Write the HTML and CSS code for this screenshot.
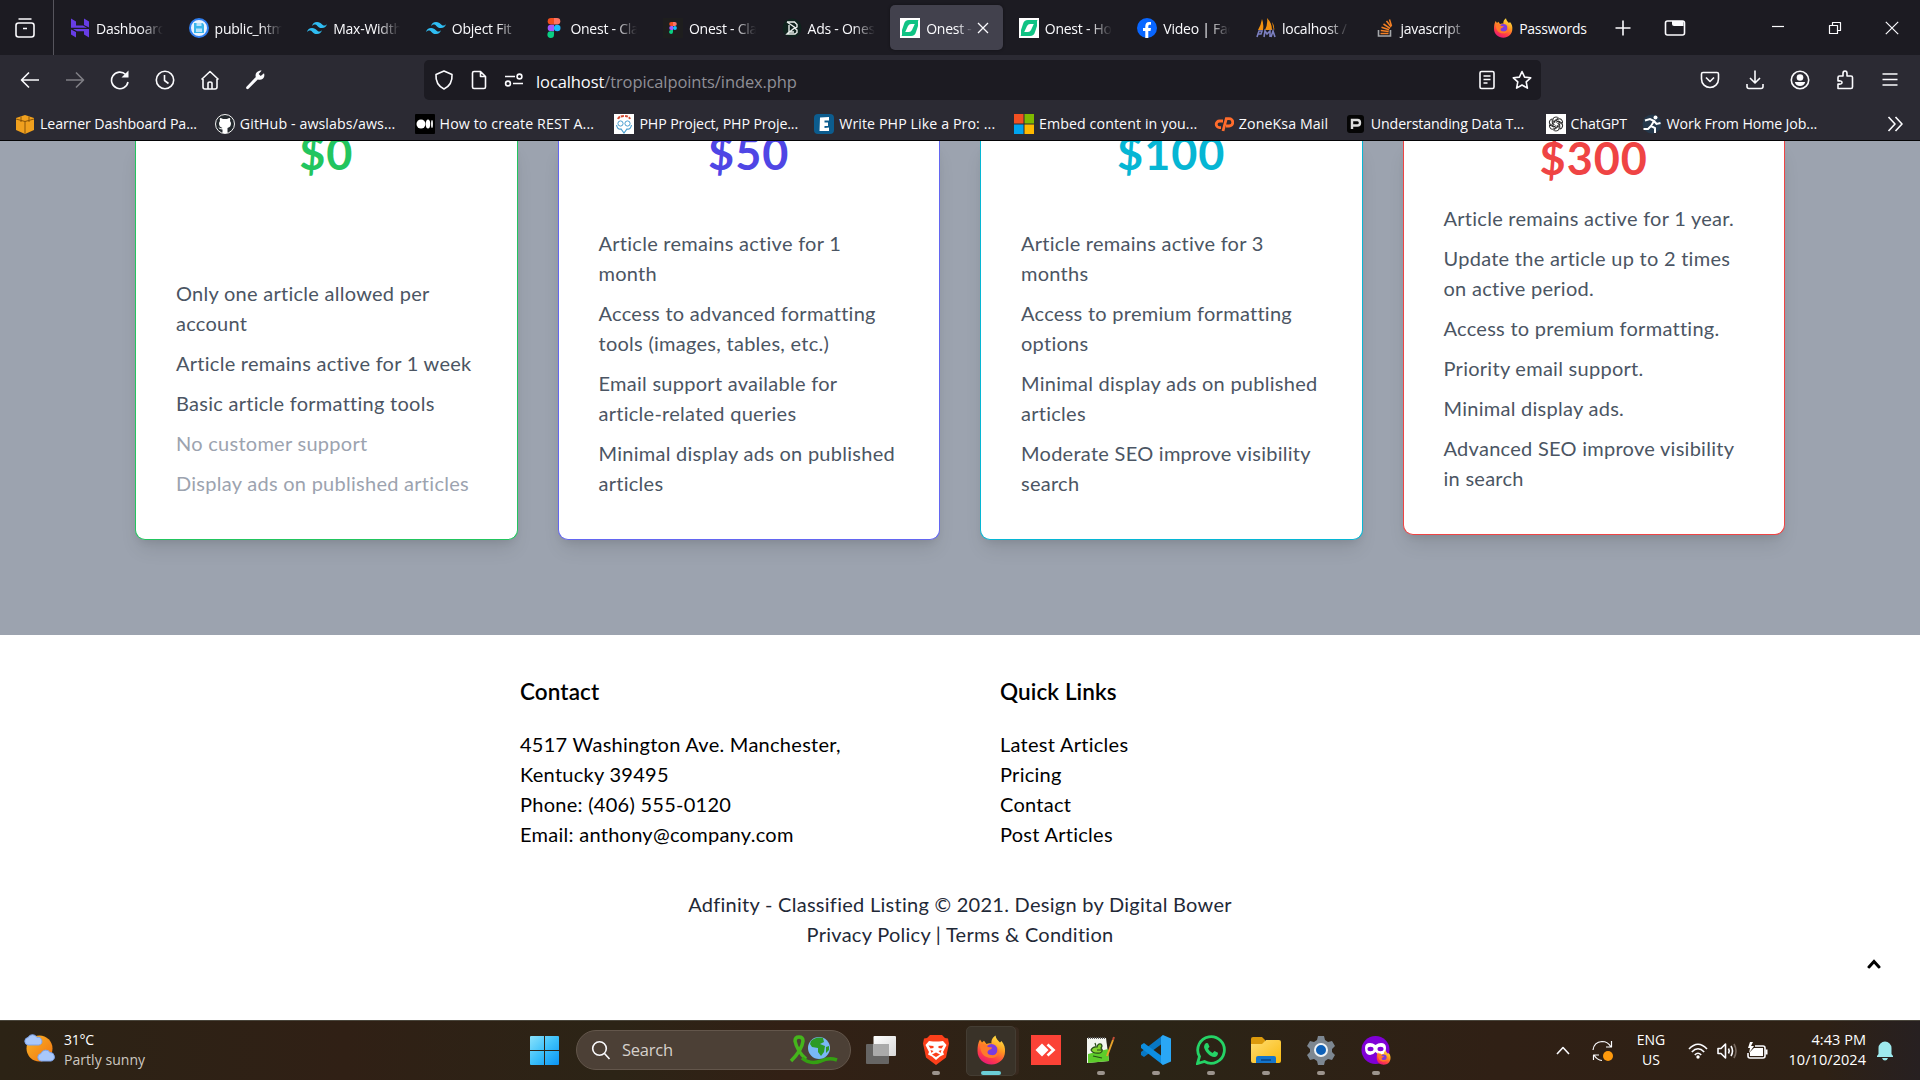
FILE: index.html
```html
<!DOCTYPE html>
<html lang="en">
<head>
<meta charset="utf-8">
<title>Onest - Home</title>
<link rel="stylesheet" href="styles.css">
</head>
<body>
<svg width="0" height="0" class="defs">
  <defs>
    <linearGradient id="ffBody" x1="0.8" y1="0" x2="0.3" y2="1"><stop offset="0" stop-color="#ffe94a"/><stop offset=".4" stop-color="#ff9a1f"/><stop offset=".75" stop-color="#ff3b47"/><stop offset="1" stop-color="#e5177b"/></linearGradient>
    <linearGradient id="win" x1="0" y1="0" x2="1" y2="1"><stop offset="0" stop-color="#8ae2fb"/><stop offset=".5" stop-color="#3cc0fa"/><stop offset="1" stop-color="#0a93f4"/></linearGradient>
    <linearGradient id="sun" x1="0" y1="0" x2="1" y2="1"><stop offset="0" stop-color="#f9b528"/><stop offset="1" stop-color="#f2730f"/></linearGradient>
    <linearGradient id="folder" x1="0" y1="0" x2="1" y2="1"><stop offset="0" stop-color="#ffdd72"/><stop offset="1" stop-color="#f9b90e"/></linearGradient>
    <linearGradient id="glass" x1="0" y1="0" x2="1" y2="1"><stop offset="0" stop-color="#ffffff"/><stop offset="1" stop-color="#d8d8d8"/></linearGradient>
    <symbol id="firefox" viewBox="0 0 30 30">
      <path d="M1.500 16C1.500 11 2 8 4 4.500L6 7.500 8 5.800 10.500 9C12 8 14 8 15.500 8.500 15 5 17 2 19.500.5 20 4 22 5.500 24 7.500L25.500 6C28.500 9.500 29.300 13 29 16.500 29 24 23 29.500 15.500 29.500S1.500 24 1.500 16Z" fill="url(#ffBody)"/>
      <circle cx="15.500" cy="15" r="6" fill="#7a3be0"/>
      <path d="M4 9C7 8 10 9 12 12L16 12.500C16 14 14 14.500 13 15 10 17 12 20 15 20 20 21 23 17 21 12 25 17 22 23 15.500 23 8 23 4 18 4 9Z" fill="#ff7a2a"/>
    </symbol>
    <symbol id="figma" viewBox="0 0 20 20">
      <path d="M10 0H7a3.300 3.300 0 0 0 0 6.600h3Z" fill="#f24e1e"/><path d="M10 0h3a3.300 3.300 0 0 1 0 6.600h-3Z" fill="#ff7262"/><path d="M10 6.700H7a3.300 3.300 0 0 0 0 6.600h3Z" fill="#a259ff"/><circle cx="13.200" cy="10" r="3.300" fill="#1abcfe"/><path d="M10 13.400H7a3.300 3.300 0 1 0 3 3.300Z" fill="#0acf83"/>
    </symbol>
    <symbol id="tailwind" viewBox="0 0 20 20"><path d="M10 4C7.300 4 5.700 5.300 5 8c1-1.300 2.200-1.800 3.500-1.500.8.200 1.300.8 1.900 1.400C11.400 8.900 12.500 10 15 10c2.700 0 4.300-1.300 5-4-1 1.300-2.200 1.800-3.500 1.500-.8-.2-1.300-.8-1.900-1.400C13.600 5.100 12.500 4 10 4ZM5 10c-2.700 0-4.300 1.300-5 4 1-1.300 2.200-1.800 3.500-1.500.8.200 1.300.8 1.900 1.400C6.400 14.900 7.500 16 10 16c2.700 0 4.300-1.300 5-4-1 1.300-2.200 1.800-3.500 1.500-.8-.2-1.300-.8-1.900-1.400C8.600 11.100 7.500 10 5 10Z" fill="#2fbdf2"/></symbol>
    <symbol id="onest" viewBox="0 0 20 20"><path d="M0 0h20v20H0Z" fill="#fff"/><path d="M2 12 4 6Q5 2 9 2h9.500L16.500 6H11Q9 6 8 8L5 14.500Q4 17 2 18ZM18 8l-2 6q-1 4-5 4H1.500L3.500 14H9q2 0 3-2l3-6.500Q16 3 18 2Z" fill="#10c384"/></symbol>
  </defs>
</svg>

<header class="browser">
  <div class="tabstrip">
    <div class="view-button"><svg class="line" width="22" height="22" viewBox="0 0 22 22"><path d="M4.500 2h13M2 8.500Q2 6 4.500 6h13Q20 6 20 8.500v9Q20 20 17.500 20h-13Q2 20 2 17.500ZM9 11.500h4"/></svg></div>
    <div class="tabs">
      <div class="tab"><svg viewBox="0 0 20 20"><path d="M1 .5 6 3.500v4h7l4 2.300H1ZM14 .5l5 3V9.500L14 7ZM19 19.500l-5-3v-3.200H7L3 11h16ZM1 11.500l5 2.500v5.500l-5-3Z" fill="#673de6"/></svg><span class="title">Dashboard</span></div>
      <div class="tab"><svg viewBox="0 0 20 20"><circle cx="10" cy="10" r="9" fill="#e8f3ff" stroke="#2f7ff0" stroke-width="2"/><path d="M5 5h8.500L15 6.500V15H5Z" fill="#39b5ea"/><path d="M7.500 5v3h5V5ZM7 10.500h6V14H7Z" fill="#b8e2fb"/></svg><span class="title">public_html</span></div>
      <div class="tab"><svg><use href="#tailwind"/></svg><span class="title">Max-Width</span></div>
      <div class="tab"><svg><use href="#tailwind"/></svg><span class="title">Object Fit</span></div>
      <div class="tab"><svg><use href="#figma"/></svg><span class="title">Onest - Classified</span></div>
      <div class="tab"><svg viewBox="0 0 20 20"><path d="M0 0h20v20H0Z" fill="#1e1e1e"/><use href="#figma" x="4" y="4" width="12" height="12"/></svg><span class="title">Onest - Classified</span></div>
      <div class="tab"><svg viewBox="0 0 20 20"><circle cx="10" cy="10" r="9.500" fill="#10231e"/><path d="M5 4h7.500L15 6.500V9l-2 1.500L15 12v2.500L13 16H5l2-2M5 4l8 5.500L5 16M7 7v7h5" fill="none" stroke="#e9efec" stroke-width="1.400"/></svg><span class="title">Ads - Onest</span></div>
      <div class="tab active"><svg><use href="#onest"/></svg><span class="title short">Onest - Home</span><svg class="line close" viewBox="0 0 12 12"><path d="m1 1 10 10M11 1 1 11"/></svg></div>
      <div class="tab"><svg><use href="#onest"/></svg><span class="title">Onest - Home</span></div>
      <div class="tab"><svg viewBox="0 0 20 20"><circle cx="10" cy="10" r="10" fill="#0866ff"/><path d="M8.300 20v-7H6v-3h2.300V8.200C8.300 5.500 9.800 4 12 4h2v2.700h-1.200c-1.100 0-1.500.6-1.500 1.500V10H14l-.5 3h-2.200v7Z" fill="#fff"/></svg><span class="title">Video | Facebook</span></div>
      <div class="tab"><svg viewBox="0 0 20 20"><path d="M2 12Q5 7 6 1 8 6 7 12ZM9 12Q12 6 11 0q5 5 5 12ZM16 4q3 4 2 9Z" fill="#f29111"/><path d="m1 19 2-6h3l-1 3H2M8 19l1-6 2 3 3-3v6M15 19l2-6 2 6" fill="none" stroke="#7b7fc0" stroke-width="1.600"/></svg><span class="title">localhost / 127</span></div>
      <div class="tab"><svg viewBox="0 0 20 20"><path d="M3.500 12v6h12v-6" fill="none" stroke="#a5a8ab" stroke-width="1.600"/><path d="M5.500 15.500h8M5.700 12.500l8 1M6.500 9.200l7.500 2.600M8.500 6l6.500 4.300M11.500 3l4.700 6M14.500 1.500l2 6.500" stroke="#f48024" stroke-width="1.500"/></svg><span class="title">javascript</span></div>
      <div class="tab"><svg><use href="#firefox"/></svg><span class="title full">Passwords</span></div>
    </div>
    <div class="strip-tools">
      <svg class="line" width="18" height="18" viewBox="0 0 18 18"><path d="M9 1.500v15M1.500 9h15"/></svg>
      <svg class="line" width="22" height="18" viewBox="0 0 22 18"><path d="M1.500 4Q1.500 2 3.500 2h15Q20.500 2 20.500 4v10q0 2-2 2h-15q-2 0-2-2Z"/><path d="M8 2h11.500v5H10Q8 7 8 5Z" fill="#fbfbfe" stroke="none"/></svg>
    </div>
    <div class="window-tools">
      <svg class="line thin" width="14" height="14" viewBox="0 0 14 14"><path d="M1 5.500h12"/></svg>
      <svg class="line thin" width="14" height="14" viewBox="0 0 14 14"><path d="M1.500 4.500h8v8h-8ZM4.500 4V1.500h8v8H10"/></svg>
      <svg class="line thin" width="14" height="14" viewBox="0 0 14 14"><path d="m.8.800 12.400 12.400M13.200.8.800 13.200"/></svg>
    </div>
  </div>

  <div class="toolbar">
    <div class="nav-icons">
      <svg class="line" viewBox="0 0 20 20"><path d="M19 10H1.500M9 2.500 1.500 10 9 17.500"/></svg>
      <svg class="line dim" viewBox="0 0 20 20"><path d="M1 10h17.500M11 2.500 18.500 10 11 17.500"/></svg>
      <svg class="line" viewBox="0 0 20 20"><path d="M18 12a8.300 8.300 0 1 1-2.300-7.500L17.500 6"/><path d="M18.500.5v7h-7Z" fill="#fbfbfe" stroke="none"/></svg>
      <svg class="line" viewBox="0 0 20 20"><circle cx="10" cy="10" r="8.700"/><path d="M9.500 5v5.500l4 3"/></svg>
      <svg class="line" viewBox="0 0 20 20"><path d="M1.500 9.500 10 1.500l8.500 8M3 9v8q0 2 2 2h10q2 0 2-2V9M8 18.500v-5q0-1.500 2-1.500t2 1.500v5"/></svg>
      <svg viewBox="0 0 20 20"><path d="M14.500.8c1-.4 2-.3 2 0L13.700 4l2 2L19 3.200c.8 2.300.2 4.300-1.200 5.500-1.500 1.300-3.300 1.300-5 .7L3.500 18.700c-1.500 1.300-3.200-.5-2-2L10.800 7C9.900 4.200 11.500 1.600 14.500.8Z" fill="#fbfbfe"/></svg>
    </div>
    <div class="urlbar">
      <svg class="line" viewBox="0 0 20 20"><path d="M10 1 18 4.500C18.500 11 16 16 10 19 4 16 1.500 11 2 4.500Z"/></svg>
      <svg class="line" viewBox="0 0 20 20"><path d="M5 1.500h6.500l5 5V17q0 1.500-1.500 1.500H5Q3.500 18.500 3.500 17V3Q3.500 1.500 5 1.500ZM11.500 1.500v5h5Z"/></svg>
      <svg class="line perms" viewBox="0 0 20 20"><path d="M1 6.500h10M9 13.500h10"/><circle cx="15.500" cy="6.500" r="2.400"/><circle cx="4" cy="13.500" r="2.400"/></svg>
      <span class="url">localhost<span class="path">/tropicalpoints/index.php</span></span>
      <svg class="line reader" viewBox="0 0 20 20"><path d="M4.500 1.500h11q1.500 0 1.500 1.500v14q0 1.500-1.500 1.500h-11Q3 18.500 3 17V3q0-1.500 1.500-1.500ZM6.500 6h7M6.500 9.500h7M6.500 13h4"/></svg>
      <svg class="line" viewBox="0 0 20 20"><path d="m10 1.500 2.600 5.600 6.100.7-4.500 4.100 1.200 6.200L10 15l-5.400 3.100 1.200-6.200L1.300 7.800l6.100-.7Z"/></svg>
    </div>
    <div class="app-icons">
      <svg class="line" viewBox="0 0 20 20"><path d="M3 2.500h14q1.500 0 1.500 1.500v5c0 5-4 8.500-8.500 8.500S1.500 14 1.500 9V4Q1.500 2.500 3 2.500Z"/><path d="m6 7.500 4 4 4-4"/></svg>
      <svg class="line" viewBox="0 0 20 20"><path d="M10 .5v12M5 8l5 5 5-5M2 14v2.500Q2 18.500 4 18.500h12q2 0 2-2V14"/></svg>
      <svg class="line" viewBox="0 0 20 20"><circle cx="10" cy="10" r="8.700"/><circle cx="10" cy="7.500" r="3.300" fill="#fbfbfe" stroke="none"/><path d="M4.800 12h10.400q-1 4-5.200 4t-5.200-4Z" fill="#fbfbfe" stroke="none"/></svg>
      <svg class="line" viewBox="0 0 20 20"><path d="M3 18.500V14q4 .5 4-1.500T3 11V7.500Q3 6 4.500 6H8V3.500Q8 1 10 1t2 2.500V6h4q1.500 0 1.500 1.500V17q0 1.500-1.500 1.500Z"/></svg>
      <svg class="line" viewBox="0 0 20 20"><path d="M2.500 4h15M2.500 9.500h15M2.500 15h15"/></svg>
    </div>
  </div>

  <div class="bookmarks">
    <a class="bm"><svg viewBox="0 0 20 20"><path d="M1 4 10 1l9 3v12l-9 4-9-4Z" fill="#f0a01e"/><path d="M1 5 10 7.500 19 5M10 7.500V20M6 2.500V8M14 2.500V8" stroke="#8a5508" fill="none"/></svg>Learner Dashboard Pa...</a>
    <a class="bm wide"><svg viewBox="0 0 20 20"><circle cx="10" cy="10" r="9.500" fill="#24292e" stroke="#f4f4f4"/><path d="M7.500 19v-3.500Q4 15.500 3.500 13q2 2 4 1Q4 13 4 9.500q0-1.500 1-2.500Q4.500 5.500 5 4q1.500 0 3 1h4q1.500-1 3-1 .5 1.500 0 3 1 1 1 2.500 0 3.500-3.500 4.500v5Z" fill="#fff"/></svg>GitHub - awslabs/aws...</a>
    <a class="bm wide"><svg viewBox="0 0 20 20"><rect width="20" height="20" rx="1"/><circle cx="6" cy="10" r="4.500" fill="#fff"/><ellipse cx="13" cy="10" rx="2.200" ry="4.500" fill="#fff"/><ellipse cx="17" cy="10" rx=".9" ry="4" fill="#fff"/></svg>How to create REST A...</a>
    <a class="bm"><svg viewBox="0 0 20 20"><path d="M0 0h20v20H0Z" fill="#fff"/><path d="M4 5q1-3 6-3t6 3" fill="none" stroke="#d24a32" stroke-width="2" stroke-dasharray="3 1"/><circle cx="6.500" cy="9.500" r="2.600" fill="none" stroke="#4b9fcf"/><circle cx="13.500" cy="9.500" r="2.600" fill="none" stroke="#4b9fcf"/><path d="M2.500 11q1 5 4.500 4l3 4 3-4q3.500 1 4.500-4" fill="none" stroke="#4b9fcf" stroke-width="1.200"/></svg>PHP Project, PHP Proje...</a>
    <a class="bm wide"><svg viewBox="0 0 20 20"><rect width="20" height="20" rx="4" fill="#0c5c8e"/><path d="M6 3.500 15 3v3.500h-4.500v2H14V12h-3.500v2l4.500-.5V17H5.500Z" fill="#fff"/></svg>Write PHP Like a Pro: ...</a>
    <a class="bm wide"><svg viewBox="0 0 20 20"><path d="M0 0h9.500v9.500H0Z" fill="#f25022"/><path d="M10.500 0H20v9.500h-9.500Z" fill="#7fba00"/><path d="M0 10.500h9.500V20H0Z" fill="#00a4ef"/><path d="M10.500 10.500H20V20h-9.500Z" fill="#ffb900"/></svg>Embed content in you...</a>
    <a class="bm mail wide"><svg viewBox="0 0 20 20"><path d="M9 7H5.500a3.300 3.300 0 0 0 0 6.600H7M9 17 12.300 4.600h2.800a3.700 3.700 0 0 1 0 7.400H12" fill="none" stroke="#ff6c2c" stroke-width="2.800"/></svg>ZoneKsa Mail</a>
    <a class="bm"><svg viewBox="0 0 20 20"><rect x="1" y="1" width="17" height="18" rx="3" fill="#050505"/><path d="M6 15V6h5.500q2.500 0 2.500 2.700T11.500 11.500H6" fill="none" stroke="#ddd" stroke-width="2.400"/></svg>Understanding Data T...</a>
    <a class="bm gpt"><svg viewBox="0 0 20 20"><path d="M0 0h20v20H0Z" fill="#fff"/><g fill="none" stroke="#222" stroke-width=".9"><path id="petal" d="M7 11.500V5.500q0-2.500 3-2.500 1.500 0 2.500 1L8.700 6.500V9"/><use href="#petal" transform="rotate(60 10 10)"/><use href="#petal" transform="rotate(120 10 10)"/><use href="#petal" transform="rotate(180 10 10)"/><use href="#petal" transform="rotate(240 10 10)"/><use href="#petal" transform="rotate(300 10 10)"/></g></svg>ChatGPT</a>
    <a class="bm"><svg viewBox="0 0 20 20"><circle cx="10" cy="10" r="9.500" fill="#25384b"/><circle cx="13.500" cy="3.500" r="2" fill="#fff"/><path d="M3 6.500 8 5l4 2-3 5 4 2v5M9 12l-3 3H1.500M12 7l2.500 3 4-1" fill="none" stroke="#fff" stroke-width="2"/></svg>Work From Home Job...</a>
    <svg class="line more" width="16" height="16" viewBox="0 0 16 16"><path d="m1.500 1 6.500 7-6.500 7M8.500 1l6.500 7-6.500 7"/></svg>
  </div>
</header>

<main class="pricing">
  <section class="card free">
    <h2 class="price">$0</h2>
    <ul><li>Only one article allowed per<br>account</li><li>Article remains active for 1 week</li><li>Basic article formatting tools</li><li class="off">No customer support</li><li class="off">Display ads on published articles</li></ul>
  </section>
  <section class="card basic">
    <h2 class="price">$50</h2>
    <ul><li>Article remains active for 1<br>month</li><li>Access to advanced formatting<br>tools (images, tables, etc.)</li><li>Email support available for<br>article-related queries</li><li>Minimal display ads on published<br>articles</li></ul>
  </section>
  <section class="card plus">
    <h2 class="price">$100</h2>
    <ul><li>Article remains active for 3<br>months</li><li>Access to premium formatting<br>options</li><li>Minimal display ads on published<br>articles</li><li>Moderate SEO improve visibility<br>search</li></ul>
  </section>
  <section class="card pro">
    <h2 class="price">$300</h2>
    <ul><li>Article remains active for 1 year.</li><li>Update the article up to 2 times<br>on active period.</li><li>Access to premium formatting.</li><li>Priority email support.</li><li>Minimal display ads.</li><li>Advanced SEO improve visibility<br>in search</li></ul>
  </section>
</main>

<footer class="site-footer">
  <div class="columns">
    <div class="column"><h3>Contact</h3><p class="address">4517 Washington Ave. Manchester,<br>Kentucky 39495</p><p>Phone: (406) 555-0120</p><p>Email: anthony@company.com</p></div>
    <div class="column"><h3>Quick Links</h3><p>Latest Articles</p><p>Pricing</p><p>Contact</p><p>Post Articles</p></div>
  </div>
  <div class="legal"><p class="copy">Adfinity - Classified Listing © 2021. Design by Digital Bower</p><p>Privacy Policy | Terms &amp; Condition</p></div>
  <svg class="to-top" width="14" height="10" viewBox="0 0 14 10"><path d="m2 8 5-5.500L12 8" fill="none" stroke="#000" stroke-width="3" stroke-linecap="round"/></svg>
</footer>

<div class="taskbar">
  <div class="weather">
    <svg width="32" height="32" viewBox="0 0 32 32"><circle cx="15.500" cy="15.500" r="13" fill="url(#sun)"/><path d="M4 12a3.800 3.800 0 0 1 0-7.500 5 5 0 0 1 9 0A3.800 3.800 0 0 1 15 12ZM17 28a3.800 3.800 0 0 1 0-7.500 5 5 0 0 1 9-1A4.300 4.300 0 0 1 27 28Z" fill="#a9c8fb" stroke="#7ea5ec"/></svg>
    <div class="lines"><span>31°C</span><span class="muted">Partly sunny</span></div>
  </div>
  <div class="dock">
    <svg class="start" width="29" height="29" viewBox="0 0 29 29"><path d="M1 0h13v14H0V1q0-1 1-1ZM15 0h13q1 0 1 1v13H15ZM0 15h14v14H1q-1 0-1-1ZM15 15h14v13q0 1-1 1H15Z" fill="url(#win)"/></svg>
    <div class="search">
      <svg class="line" width="20" height="20" viewBox="0 0 20 20"><circle cx="8.500" cy="8.500" r="6.800"/><path d="m13.500 13.500 5 5.500"/></svg>
      <span>Search</span>
      <svg width="50" height="30" viewBox="0 0 50 30"><path d="M2 26Q13 15 14 6 14 2 10 2T6 6Q8 16 17 24" fill="none" stroke="#45b51c" stroke-width="3.500"/><path d="M13 23q8 7 19 3 8-4 16-1" fill="none" stroke="#34a012" stroke-width="3.500"/><circle cx="30" cy="13" r="11" fill="#79b8f6"/><path d="M22 6q5-5 12-3l1 4-4 2 5 2-1 6-3 4-3-4v-4l-6-1-2-3ZM37 12l3-1v4l-3 3Z" fill="#2c9a27"/></svg>
    </div>
    <div class="apps">
      <div class="app"><svg viewBox="0 0 30 30"><rect x="0" y="9" width="23" height="20" rx="1" fill="#666564"/><rect x="7.500" y="1" width="22.500" height="20" rx="1" fill="url(#glass)"/><path d="M7.500 9H23v12H7.500Z" fill="#aaa"/></svg></div>
      <div class="app running"><svg viewBox="0 0 30 30"><path d="M9 0h12l3 3 3 .5 1 5-3 14L15 30 5 22.500 2 8.500l1-5L6 3Z" fill="#fb3f1a"/><path d="m8 6 4 .5h6l4-.5 3.500 4-3.500 7 1 2.500-4 2-4 3.500-4-3.500-4-2L8 17l-3.500-7Z" fill="#fff"/><path d="m7.500 10.500 5 .5 0 2-3 .5ZM22.500 10.500l-5 .5 0 2 3 .5ZM11 19.500l4-2 4 2-4 2.500ZM9.500 15l3 1-2 2ZM20.500 15l-3 1 2 2Z" fill="#fb3f1a"/></svg></div>
      <div class="app running current"><svg viewBox="0 0 30 30"><use href="#firefox"/></svg></div>
      <div class="app"><svg viewBox="0 0 30 30"><path d="M0 0h30v30H0Z" fill="#fb4236"/><path d="m11 8.500 6.500 6.500-6.500 6.500L4.500 15Z" fill="#fff"/><path d="m16.500 9.500 6 5.500-6 5.500" fill="none" stroke="#fff" stroke-width="2.700"/></svg></div>
      <div class="app running"><svg viewBox="0 0 30 30"><path d="M1 3h19l3 23-22 2Z" fill="#f3f5ef"/><path d="m2 19 20-5 1 12-21 2Z" fill="#5dcc2b"/><path d="M2 3h17" stroke="#5f5f5f" stroke-width="2" stroke-dasharray="1 1"/><path d="M5 15q2-4 6-3 1-4 4-3 2 2 0 4 3 3-1 5-7 1-9-3ZM7 21l9 2M10 11l-1-3M11 15h5" fill="#83d331" stroke="#294d18" stroke-width="1.200"/><path d="m21 21 6-16" stroke="#e8a32b" stroke-width="2"/><path d="m27 5 1-3" stroke="#c24d35" stroke-width="2"/></svg></div>
      <div class="app running"><svg viewBox="0 0 30 30"><path d="m22 0 0 8L3 22 0 20v-3L22 0Z" fill="#0878c4"/><path d="m22 30 0-8L3 8 0 10v3Z" fill="#0d8ee0"/><path d="M22 0 30 3.500v23L22 30 20 28V2Z" fill="#2aa7f5"/></svg></div>
      <div class="app running"><svg viewBox="0 0 30 30"><path d="m1.500 28.500 2-7A13.300 13.300 0 1 1 8.500 26.500Z" fill="none" stroke="#25d366" stroke-width="2.800"/><path d="m10 8 2 .2 1.500 3.500-1.500 2q1.500 3 4.500 4.300l2-2 3.500 1.700q0 4-3.700 4.300C14 22 8.500 16 8 12q0-2.500 2-4Z" fill="#25d366"/></svg></div>
      <div class="app running"><svg viewBox="0 0 30 30"><path d="M0 4q0-2 2-2h9l3 3v6H0Z" fill="#dc9a0c"/><path d="M0 9h11l4-4h13q2 0 2 2v19q0 2-2 2H2q-2 0-2-2Z" fill="url(#folder)"/><path d="M5 28v-5q0-2 2-2h16q2 0 2 2v5Z" fill="#1475cc"/><path d="M10 25h10" stroke="#0a4f96" stroke-width="2"/></svg></div>
      <div class="app running"><svg viewBox="0 0 30 30"><path d="M12 1h6l1 4 3 2 4-1 3 5-3 3v3l3 3-3 5-4-1-3 2-1 4h-6l-1-4-3-2-4 1-3-5 3-3v-3l-3-3 3-5 4 1 3-2Z" fill="#7d8791"/><circle cx="15" cy="15" r="6" fill="#0d60b8" stroke="#eef2f5" stroke-width="2"/></svg></div>
      <div class="app running"><svg viewBox="0 0 30 30"><circle cx="14.500" cy="15" r="14" fill="#8000d7"/><path d="M4 13q0-5 5-5 3 0 5.500 2Q17 8 20 8q5 0 5 5 0 7-5 7-3 0-5.500-3Q12 20 9 20q-5 0-5-7Z" fill="#fff"/><ellipse cx="9.500" cy="14" rx="3" ry="2.200" fill="#8000d7"/><ellipse cx="19.500" cy="14" rx="3" ry="2.200" fill="#8000d7"/><use href="#firefox" x="15" y="15" width="15" height="15"/></svg></div>
    </div>
  </div>
  <div class="tray">
    <svg class="line chev" width="14" height="9" viewBox="0 0 14 9"><path d="m1 8 6-6.500L13 8"/></svg>
    <svg class="line thin sync" width="22" height="22" viewBox="0 0 22 22"><path d="M1 10Q2 2 10 1.500q6 0 9 5.500M19.500 1v6H14M1.500 20v-5H7M2 15q3 5 8 5.500"/><circle cx="16" cy="16" r="5" fill="#ff9a0d" stroke="none"/></svg>
    <div class="lang"><span>ENG</span><span>US</span></div>
    <svg class="line wifi" width="20" height="16" viewBox="0 0 20 16"><path d="M1 6q9-9.500 18 0M3.800 9q6.200-6.500 12.400 0M6.800 12q3.200-3.500 6.400 0"/><circle cx="10" cy="14" r="1.700" fill="#fff" stroke="none"/></svg>
    <svg class="line sound" width="20" height="18" viewBox="0 0 20 18"><path d="M1 6.500h3L8.500 2v14L4 11.500H1ZM11.500 6.500q1.500 2.500 0 5M14 4q3 5 0 10"/><path d="M17 2q4 7 0 14" stroke="#77695f"/></svg>
    <svg class="line batt" width="21" height="18" viewBox="0 0 21 18"><path d="M8 4h8q2 0 2 2v8q0 2-2 2H3q-2 0-2-2v-3"/><path d="M7 6h9v8H3v-4ZM18.500 7.500h2v5h-2ZM3 0 1 6h2l-1 5 5-7H4L6 0Z" fill="#fff" stroke="none"/></svg>
    <div class="clock"><span>4:43 PM</span><span>10/10/2024</span></div>
    <svg class="bell" width="16" height="20" viewBox="0 0 16 20"><path d="M0 16v-1l1.500-2V7a6.500 6.500 0 0 1 13 0v6l1.500 2v1ZM5 17h6q-1 2.500-3 2.500T5 17Z" fill="#9eeaee"/></svg>
  </div>
</div>
</body>
</html>
```
FILE: styles.css
```css
* { box-sizing: border-box; margin: 0; padding: 0; }
body {
  width: 1920px; height: 1080px; overflow: hidden;
  display: flex; flex-direction: column;
  background: #fff; font-family: Lato, sans-serif;
}
.defs { position: absolute; }
svg { flex: none; display: block; }
.line { fill: none; stroke: #fbfbfe; stroke-width: 1.6; stroke-linejoin: round; }
.thin { stroke-width: 1.2; }

.browser {
  flex: none; height: 141px; background: #2b2a33; color: #fbfbfe;
  border-bottom: 1px solid #050507;
  font: 14px/20px "Open Sans", sans-serif; white-space: nowrap;
}
.tabstrip { height: 55px; background: #1c1b22; display: flex; align-items: center; }
.view-button { width: 54px; height: 55px; padding: 17px 0 0 14px; border-right: 1px solid #56555d; }
.tabs { display: flex; gap: 5.600px; padding-left: 6px; }
.tab { width: 113px; height: 45px; padding: 0 0 0 10px; display: flex; align-items: center; gap: 4px; border-radius: 5px; }
.tab svg { width: 20px; height: 20px; }
.tab.active { background: #42414d; box-shadow: 0 0 3px #0006; }
.title { width: 69px; padding: 2px 0 0 2px; overflow: hidden; letter-spacing: -.25px; -webkit-mask-image: linear-gradient(90deg, #000 68%, transparent); mask-image: linear-gradient(90deg, #000 68%, transparent); }
.title.short { width: 49px; }
.title.full { width: 72px; -webkit-mask-image: none; mask-image: none; }
.tab .close { width: 12px; height: 12px; stroke-width: 1.3; }
.strip-tools { display: flex; align-items: center; gap: 32px; margin-left: 18px; }
.window-tools { display: flex; gap: 43px; margin-left: auto; padding-right: 21px; }

.toolbar { height: 46px; display: flex; align-items: flex-start; padding-top: 5px; }
.nav-icons, .app-icons { display: flex; align-items: center; height: 40px; gap: 25px; }
.nav-icons { width: 424px; padding-left: 20px; }
.nav-icons svg, .app-icons svg, .urlbar svg { width: 20px; height: 20px; }
.dim { opacity: .4; }
.urlbar { width: 1117px; height: 40px; background: #1c1b22; border-radius: 5px; display: flex; align-items: center; gap: 15px; padding: 0 9px 0 10px; }
.url { font-size: 16.500px; margin-left: -3px; padding-top: 3px; letter-spacing: -.1px; }
.path { color: #8f8f96; }
.reader { margin-left: auto; }
.app-icons { margin-left: auto; gap: 25px; padding-right: 20px; }

.bookmarks { height: 39px; display: flex; align-items: center; padding: 6px 0 0 15px; font-size: 14.200px; letter-spacing: -.12px; }
.bm { width: 199.800px; display: flex; align-items: center; gap: 5px; }
.bm svg { width: 20px; height: 20px; }
.bm.wide { letter-spacing: .1px; }
.bm.mail { width: 132px; }
.bm.gpt { width: 96px; }
.more { margin-left: auto; margin-right: 17px; }

.pricing {
  flex: none; height: 494px; overflow: hidden; background: #9ca3af;
  display: grid; grid-template-columns: repeat(4, 382.500px); gap: 40px;
  align-items: start; padding: 0 135px;
}
.card {
  height: 399px; padding: 0 40px 41px; background: #fff;
  border: 1px solid; border-top: 0; border-radius: 0 0 10px 10px;
  display: flex; flex-direction: column; justify-content: space-between;
  box-shadow: 0 12px 19px -4px #0000001a, 0 5px 8px -4px #0000001a;
}
.card.pro { height: 394px; }
.price { margin-top: -13px; text-align: center; font: 700 45px/50px Lato, sans-serif; letter-spacing: 1px; }
.pro .price { margin-top: -8px; }
.card ul { list-style: none; display: grid; gap: 10px; color: #4b5563; font-size: 20px; line-height: 30px; letter-spacing: .27px; white-space: nowrap; }
.card .off { color: #9ca3af; }
.free { border-color: #22c55e; } .free .price { color: #22c55e; }
.basic { border-color: #6366f1; } .basic .price { color: #4f46e5; }
.plus { border-color: #06b6d4; } .plus .price { color: #06b6d4; }
.pro { border-color: #ef4444; } .pro .price { color: #ef4444; }

.site-footer { flex: none; position: relative; height: 385px; padding-top: 41px; color: #000; font-size: 20px; line-height: 30px; letter-spacing: .27px; }
.columns { display: grid; grid-template-columns: 480px 480px; justify-content: start; padding-left: 520px; }
.column h3 { font-size: 22.500px; font-weight: 600; line-height: 32px; margin-bottom: 21px; letter-spacing: .1px; }
.legal { margin-top: 40px; text-align: center; color: #1f2937; }
.to-top { position: absolute; left: 1867px; top: 324px; }

.taskbar {
  flex: none; height: 60px; border-top: 1px solid #49453b; color: #fff;
  background: linear-gradient(90deg, #2c2315, #302015 18%, #2c2416 32%, #322015 41%, #2b2416 60%, #302015 78%, #2e2115 95%, #272021);
  display: flex; align-items: center;
  font: 14px/20px "Open Sans", sans-serif; letter-spacing: -.25px;
}
.weather { width: 530px; padding-left: 24px; display: flex; align-items: center; gap: 8px; }
.weather svg { margin-top: -3px; }
.lines, .lang, .clock { display: flex; flex-direction: column; padding-bottom: 2px; }
.muted { color: #cdc8c1; letter-spacing: .05px; }
.dock { display: flex; align-items: center; }
.search { width: 275px; height: 40px; margin: 0 5px 0 17px; padding: 0 11px 0 14px; border-radius: 20px; border: 1px solid #63564b; background: #4c4036; display: flex; align-items: center; gap: 11px; font-size: 16.500px; color: #d6d1cc; }
.search svg:last-child { margin-left: auto; }
.start, .search { margin-top: -1px; }
.apps { display: flex; gap: 5px; }
.app { position: relative; width: 50px; height: 50px; padding: 9px 10px; border-radius: 5px; }
.app svg { width: 30px; height: 30px; }
.app.current { background: #393228; border: 1px solid #443d33; padding: 8px 9px; box-shadow: 4px 0 0 -1px #38291e; }
.running::after { content: ""; position: absolute; left: 21px; bottom: 1px; width: 8px; height: 4px; border-radius: 2px; background: #9c948d; }
.current::after { left: 14px; bottom: 0; width: 20px; background: #6bced6; }
.tray { margin-left: auto; display: flex; align-items: center; padding-right: 27px; }
.sync { margin-left: 22px; }
.lang { margin-left: 21px; width: 32px; text-align: center; letter-spacing: 0; }
.wifi { margin-left: 21px; }
.sound { margin-left: 9px; }
.batt { margin-left: 10px; }
.clock { width: 79px; margin-left: 19px; text-align: right; font-size: 14.500px; letter-spacing: .05px; }
.bell { margin-left: 11px; }
```
